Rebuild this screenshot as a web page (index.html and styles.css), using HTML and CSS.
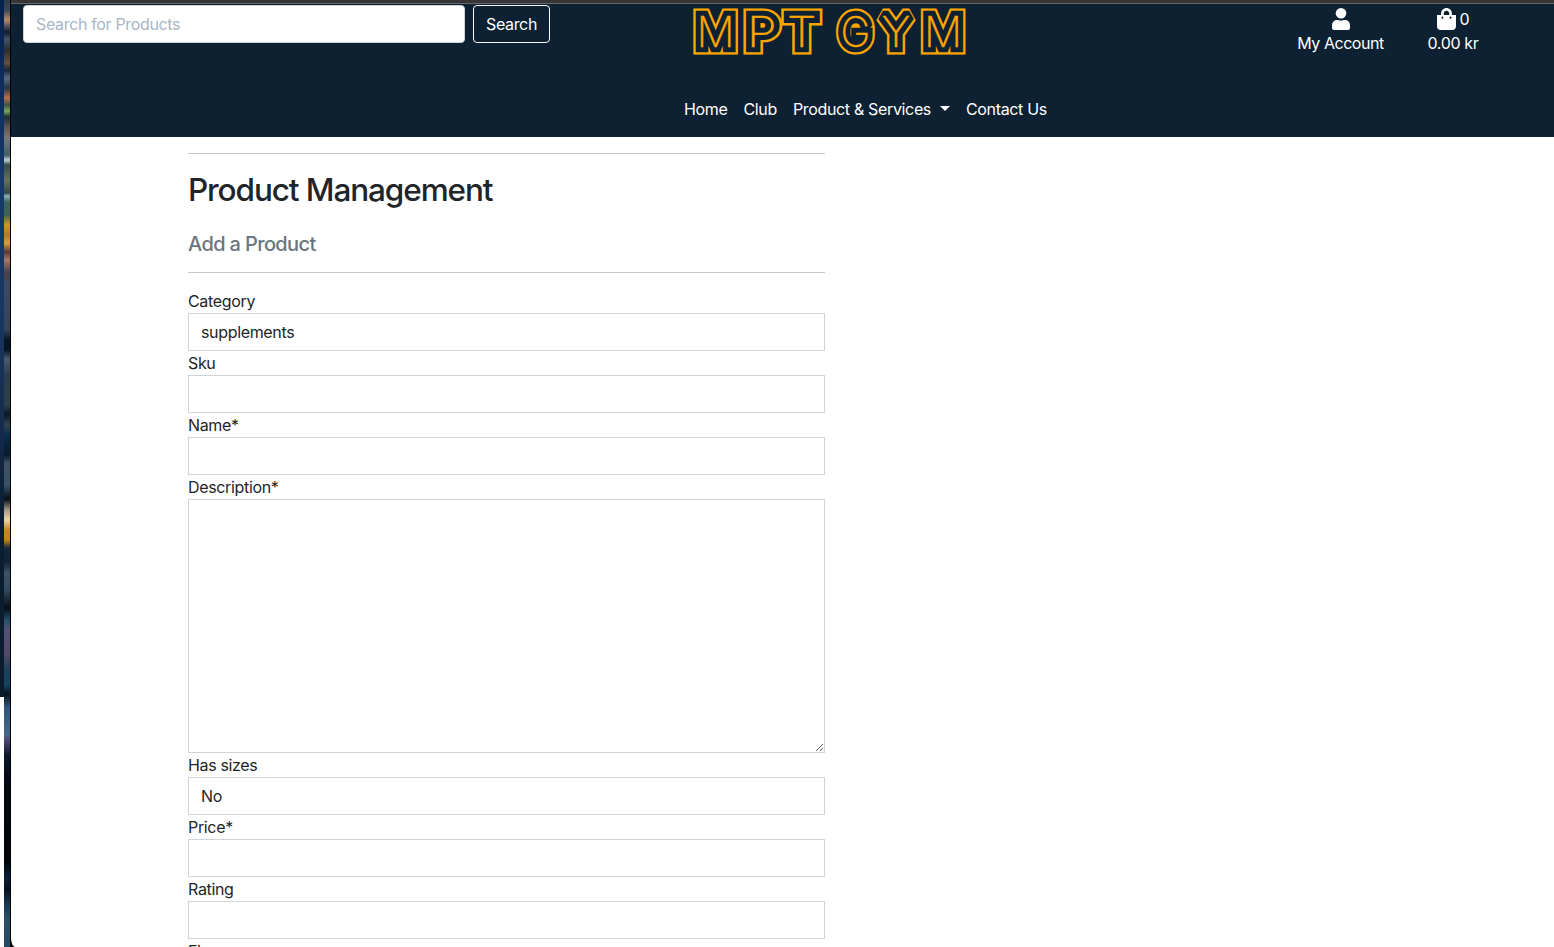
FILE: index.html
```
<!DOCTYPE html>
<html lang="en">
<head>
<meta charset="utf-8">
<title>MPT GYM - Product Management</title>
<link rel="stylesheet" href="styles.css">
</head>
<body>
<div class="desktop">
  <div class="edge"></div>
  <div class="wallpaper"></div>
  <div class="window">
    <header class="header">
      <div class="topbar">
        <form class="search">
          <input class="search-input" type="text" placeholder="Search for Products">
          <button class="search-button" type="button">Search</button>
        </form>
        <a class="brand">
          <svg class="logo" width="274" height="48" viewBox="0 0 274 48" role="img" aria-label="MPT GYM">
            <defs>
              <g id="word">
                <text transform="translate(3.600 39) scale(1.010 1)">M</text>
                <text transform="translate(54 39) scale(1.140 1)">P</text>
                <text transform="translate(94 39) scale(1.120 1)">T</text>
                <text transform="translate(147.600 39) scale(.96 1)">G</text>
                <text transform="translate(188.500 39) scale(1.050 1)">Y</text>
                <text transform="translate(230.900 39) scale(1.010 1)">M</text>
              </g>
            </defs>
            <use href="#word" class="logo-outer"/>
            <use href="#word" class="logo-gap"/>
            <use href="#word" class="logo-core"/>
          </svg>
        </a>
        <div class="account">
          <svg width="18" height="22" viewBox="0 0 18 22"><circle cx="9" cy="5.3" r="5.3"/><path d="M5 12h1.200c1.800.8 3.800.8 5.600 0H13a5 5 0 0 1 5 5v3a2 2 0 0 1-2 2H2a2 2 0 0 1-2-2v-3a5 5 0 0 1 5-5z"/></svg>
          <span class="account-text">My Account</span>
        </div>
        <div class="bag">
          <div class="bag-row">
            <svg width="19" height="22" viewBox="0 0 448 512" preserveAspectRatio="none"><path d="M352 160v-32C352 57.400 294.600 0 224 0S96 57.400 96 128v32H0v272c0 44.200 35.800 80 80 80h288c44.200 0 80-35.800 80-80V160zm-192-32c0-35.300 28.700-64 64-64s64 28.700 64 64v32H160zm160 120a24 24 0 1 1 0-48 24 24 0 0 1 0 48zm-192 0a24 24 0 1 1 0-48 24 24 0 0 1 0 48z"/></svg>
            <span>0</span>
          </div>
          <span class="price">0.00 kr</span>
        </div>
      </div>
      <nav class="nav">
        <a>Home</a><a>Club</a><a>Product &amp; Services<i class="caret"></i></a><a>Contact Us</a>
      </nav>
    </header>
    <main class="content">
      <hr>
      <h2>Product Management</h2>
      <h5>Add a Product</h5>
      <hr>
      <form class="form">
        <label>Category</label><div class="control">supplements</div>
        <label>Sku</label><input class="control">
        <label>Name*</label><input class="control">
        <label>Description*</label><textarea class="control area"></textarea>
        <label>Has sizes</label><div class="control">No</div>
        <label>Price*</label><input class="control">
        <label>Rating</label><input class="control">
        <label>Flavours</label>
      </form>
    </main>
  </div>
</div>
</body>
</html>
```
FILE: styles.css
```
* { box-sizing: border-box; }
body { margin: 0; overflow: hidden; font: 16px/24px Inter, "Liberation Sans", sans-serif; letter-spacing: -.34px; color: #212529; }
.desktop { display: grid; grid-template-columns: 4px 6px 1fr; height: 100vh; overflow: hidden; background: #000; }
.edge { background: linear-gradient(#06224f 0, #15386d 180px, #17375f 320px, #162c4f 420px, #0b1d32 520px, #0b1b2b 697px, #fff 697px); }
.wallpaper {
  background: linear-gradient(#2d3b49 0, #39465a 10px, #b68a66 20px, #555362 26px, #101d2b 32px, #425469 39px, #2b2d31 50px, #655141 63px, #182533 70px, #536c83 78px, #263444 88px, #b8714f 98px, #3e5245 105px, #79a95a 111px, #172e36 117px, #615a57 128px, #777 138px, #3f6068 155px, #c0d0d1 160px, #354949 165px, #65735c 180px, #344747 193px, #91b1b5 196px, #3c6358 202px, #3c6358 215px, #d19a25 225px, #b17530 235px, #dc9d48 243px, #5a3a35 252px, #a67966 260px, #493f4a 272px, #3f4962 285px, #354259 330px, #071421 340px, #071421 350px, #4e5a6a 359px, #2a3c49 375px, #2e414a 405px, #061725 414px, #334452 425px, #082e4c 435px, #061b2c 455px, #3f5264 463px, #385268 485px, #080d14 499px, #a4988a 510px, #ebd6a0 520px, #c28620 530px, #c28620 540px, #142638 548px, #102336 562px, #3d5366 573px, #314b62 590px, #050c14 608px, #235069 620px, #565177 630px, #51486a 655px, #1d405c 669px, #164260 685px, #06131f 694px, #32577a 708px, #466786 735px, #504971 740px, #0a1930 755px, #030812 780px, #02050a 860px, #091e38 878px, #061321 890px, #183b52 905px, #2c4f64 920px, #264962 947px);
}
.window { margin-left: 1px; min-width: 0; overflow: hidden; background: #fff; border-bottom-left-radius: 4px 9px; }
.header { height: 137px; border-top: 3px solid #363638; background: #0d2133; color: #fff; box-shadow: inset 0 1px #66686a; }
.topbar { display: flex; height: 86px; padding: 2px 75px 0 12px; align-items: flex-start; }
.search { display: flex; gap: 8px; width: 527px; }
.search-input { width: 442px; height: 38px; padding: 6px 12px; border: 1px solid #ced4da; border-radius: 4px; font: inherit; letter-spacing: -.34px; }
.search-input::placeholder { color: #a8b6c6; opacity: 1; }
.search-button { width: 77px; height: 38px; padding: 0; border: 1px solid #f8f9fa; border-radius: 4px; background: none; color: #fff; font: inherit; letter-spacing: -.34px; }
.brand { margin: 3px 0 0 143px; height: 48px; }
.logo { display: block; overflow: visible; }
.logo text { font: 200 42px Inter, sans-serif; letter-spacing: 0; }
.logo-outer { fill: #ffa500; stroke: #ffa500; stroke-width: 15.200px; stroke-miterlimit: 1.500; }
.logo-gap { fill: #0d2133; stroke: #0d2133; stroke-width: 10.600px; stroke-miterlimit: 1.500; }
.logo-core { fill: #ffa500; stroke: #ffa500; stroke-width: .4px; }
.account { margin: 3px 0 0 auto; display: flex; flex-direction: column; align-items: center; width: 87px; }
.account svg, .bag svg { display: block; fill: #fff; }
.account-text { margin-top: 1px; white-space: nowrap; letter-spacing: -.45px; }
.bag { width: 52px; margin: 3px 0 0 43px; display: flex; flex-direction: column; align-items: center; }
.bag-row { display: flex; height: 22px; gap: 4px; line-height: 22px; }
.price { margin-top: 1px; white-space: nowrap; }
.nav { display: flex; gap: 16px; padding: 8px 0 0 673px; white-space: nowrap; }
.caret { display: inline-block; margin-left: 9px; vertical-align: 4px; border: 5px solid transparent; border-top-color: #fff; border-bottom: 0; }
.content { width: 637px; margin-left: 177px; padding-top: 16px; }
hr { height: 1px; margin: 0; border: 0; background: #c7c8c9; }
h2 { margin: 17px 0 0; font-size: 31.500px; line-height: 38px; font-weight: 540; letter-spacing: -1.100px; }
h5 { margin: 23px 0 16px; font-size: 20px; line-height: 24px; font-weight: 540; letter-spacing: -.63px; color: #6c757d; }
.form { padding-top: 16px; }
label { display: block; height: 24px; }
.control { display: block; width: 100%; height: 38px; padding: 6px 12px; border: 1px solid #ced4da; border-radius: 0; background: #fff; font: inherit; color: inherit; letter-spacing: inherit; }
.area { height: 254px; resize: vertical; }
```
